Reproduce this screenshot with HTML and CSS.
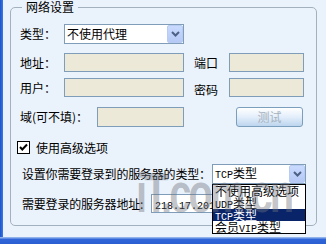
FILE: index.html
```html
<!DOCTYPE html>
<html>
<head>
<meta charset="utf-8">
<link rel="stylesheet" href="styles.css">
</head>
<body>
<div class="window">
  <div class="strip-left"></div>
  <div class="main">
    <fieldset class="group">
      <legend>网络设置</legend>
      <div class="row r1">
        <span class="lbl w44">类型：</span>
        <div class="select s1"><span class="val">不使用代理</span><span class="btn"><svg width="9" height="6" viewBox="0 0 9 6"><path d="M1 1 L4.5 4.5 L8 1" fill="none" stroke="#4d6185" stroke-width="2"/></svg></span></div>
      </div>
      <div class="row r2">
        <span class="lbl w44">地址：</span>
        <div class="field f120"></div>
        <span class="lbl lbl2">端口</span>
        <div class="field f75"></div>
      </div>
      <div class="row r3">
        <span class="lbl w44">用户：</span>
        <div class="field f120"></div>
        <span class="lbl lbl2 low">密码</span>
        <div class="field f75"></div>
      </div>
      <div class="row r4">
        <span class="lbl w77">域(可不填)：</span>
        <div class="field f87"></div>
        <div class="test">测试</div>
      </div>
      <div class="row r5">
        <span class="check"><svg width="13" height="13" viewBox="0 0 13 13"><rect x="0.5" y="0.5" width="12" height="12" fill="#fff" stroke="#000"/><path d="M3 6 L5.3 8.5 L10 3.5" fill="none" stroke="#000" stroke-width="2"/></svg></span>
        <span class="lbl">使用高级选项</span>
      </div>
      <div class="row r6">
        <span class="lbl w190 tight">设置你需要登录到的服务器的类型：</span>
        <div class="select s2"><span class="val"><span class="lat">TCP</span>类型</span><span class="btn"><svg width="9" height="6" viewBox="0 0 9 6"><path d="M1 1 L4.5 4.5 L8 1" fill="none" stroke="#4d6185" stroke-width="2"/></svg></span>
          <ul class="list">
            <li>不使用高级选项</li>
            <li><span class="lat">UDP</span>类型</li>
            <li class="sel"><span class="lat">TCP</span>类型</li>
            <li>会员<span class="lat">VIP</span>类型</li>
          </ul>
        </div>
      </div>
      <div class="row r7">
        <span class="lbl w129 tight">需要登录的服务器地址:</span>
        <div class="addr"><span class="lat">218.17.201.1</span></div>
      </div>
    </fieldset>
    <div class="watermark">iT.com.cn</div>
  </div>
</div>
<div class="strip-bottom"></div>
</body>
</html>
```
FILE: styles.css
```css
html, body {
  margin: 0;
  padding: 0;
}
body {
  width: 326px;
  height: 244px;
  overflow: hidden;
  background: #eaf2fb;
  font-family: "Noto Sans CJK SC", "Liberation Sans", sans-serif;
  font-size: 12px;
  color: #000;
}
.window {
  display: flex;
  height: 237px;
}
.strip-left {
  width: 3px;
  flex: none;
  background: linear-gradient(to right, #1d54c8, #3d78e6);
}
.main {
  position: relative;
  flex: 1;
  overflow: hidden;
}
.group {
  margin: 0 0 0 7px;
  padding: 0 9px 12px 9px;
  width: 287px;
  border: 1px solid #a3b1bf;
  border-radius: 5px;
  min-width: 0;
}
.group legend {
  margin-left: 2px;
  padding: 0 4px;
  font-size: 12px;
  line-height: 14px;
}
.row {
  display: flex;
  align-items: center;
}
.lbl {
  line-height: 14px;
  white-space: nowrap;
  flex: none;
}
.tight { letter-spacing: -0.2px; }
.w44 { width: 44px; }
.w77 { width: 77px; }
.w190 { width: 190px; margin-left: 2px; }
.w129 { width: 129px; margin-left: 2px; }
.lbl2 { width: 35px; margin-left: 10px; }
.low { position: relative; top: 2px; }
.r1 { margin-top: 10px; height: 20px; }
.r2 { margin-top: 9px; height: 19px; }
.r3 { margin-top: 6px; height: 19px; }
.r4 { margin-top: 10px; height: 20px; }
.r5 { margin-top: 14px; height: 13px; }
.r6 { margin-top: 10px; height: 20px; }
.r7 { margin-top: 10px; height: 19px; }
.select {
  position: relative;
  box-sizing: border-box;
  height: 20px;
  background: #fff;
  border: 1px solid #7f9db9;
  display: flex;
  align-items: center;
}
.s1 { width: 120px; }
.s2 { width: 94px; }
.val {
  flex: 1;
  padding-left: 2px;
  line-height: 14px;
}
.btn {
  box-sizing: border-box;
  width: 16px;
  height: 18px;
  border: 1px solid #b8cbf3;
  border-radius: 2px;
  background: linear-gradient(#c9daff, #b5c9f5);
  display: flex;
  align-items: center;
  justify-content: center;
}
.field {
  box-sizing: border-box;
  height: 19px;
  background: #ece9d8;
  border: 1px solid #7f9db9;
  flex: none;
}
.f120 { width: 120px; }
.f75 { width: 75px; }
.f87 { width: 87px; height: 20px; }
.test {
  box-sizing: border-box;
  margin-left: 52px;
  width: 67px;
  height: 20px;
  border: 1px solid #7b9ebd;
  border-radius: 3px;
  background: linear-gradient(#ffffff, #e3eefa 50%, #bcd5ee);
  color: #a6b1bd;
  text-align: center;
  line-height: 18px;
}
.check {
  width: 13px;
  height: 13px;
  margin-left: -3px;
  margin-right: 6px;
  display: flex;
}
.lat {
  font-family: "Liberation Mono", monospace;
  font-size: 10px;
}
.addr {
  box-sizing: border-box;
  width: 153px;
  height: 19px;
  border: 1px solid #7f9db9;
  background: #fff;
  padding-left: 3px;
  line-height: 17px;
  flex: none;
  white-space: nowrap;
  overflow: hidden;
}
.list {
  position: absolute;
  z-index: 2;
  top: 19px;
  left: -1px;
  box-sizing: border-box;
  width: 94px;
  margin: 0;
  padding: 0;
  list-style: none;
  border: 1px solid #000;
  background: #fff;
}
.list li {
  height: 12px;
  line-height: 12px;
  padding-left: 2px;
  white-space: nowrap;
  overflow: hidden;
}
.list li.sel {
  background: #0a246a;
  color: #fff;
}
.watermark {
  position: absolute;
  z-index: 3;
  left: 133px;
  top: 162px;
  font-family: "Liberation Sans", sans-serif;
  font-weight: bold;
  font-size: 40px;
  line-height: 44px;
  letter-spacing: -3px;
  color: rgba(110, 115, 125, 0.42);
  pointer-events: none;
  white-space: nowrap;
  transform: scaleY(1.4);
  transform-origin: 0 0;
}
.strip-bottom {
  height: 7px;
  background: linear-gradient(#8fb1ec 0, #8fb1ec 1px, #2f66d8 2px, #2a5fd2);
}
```
